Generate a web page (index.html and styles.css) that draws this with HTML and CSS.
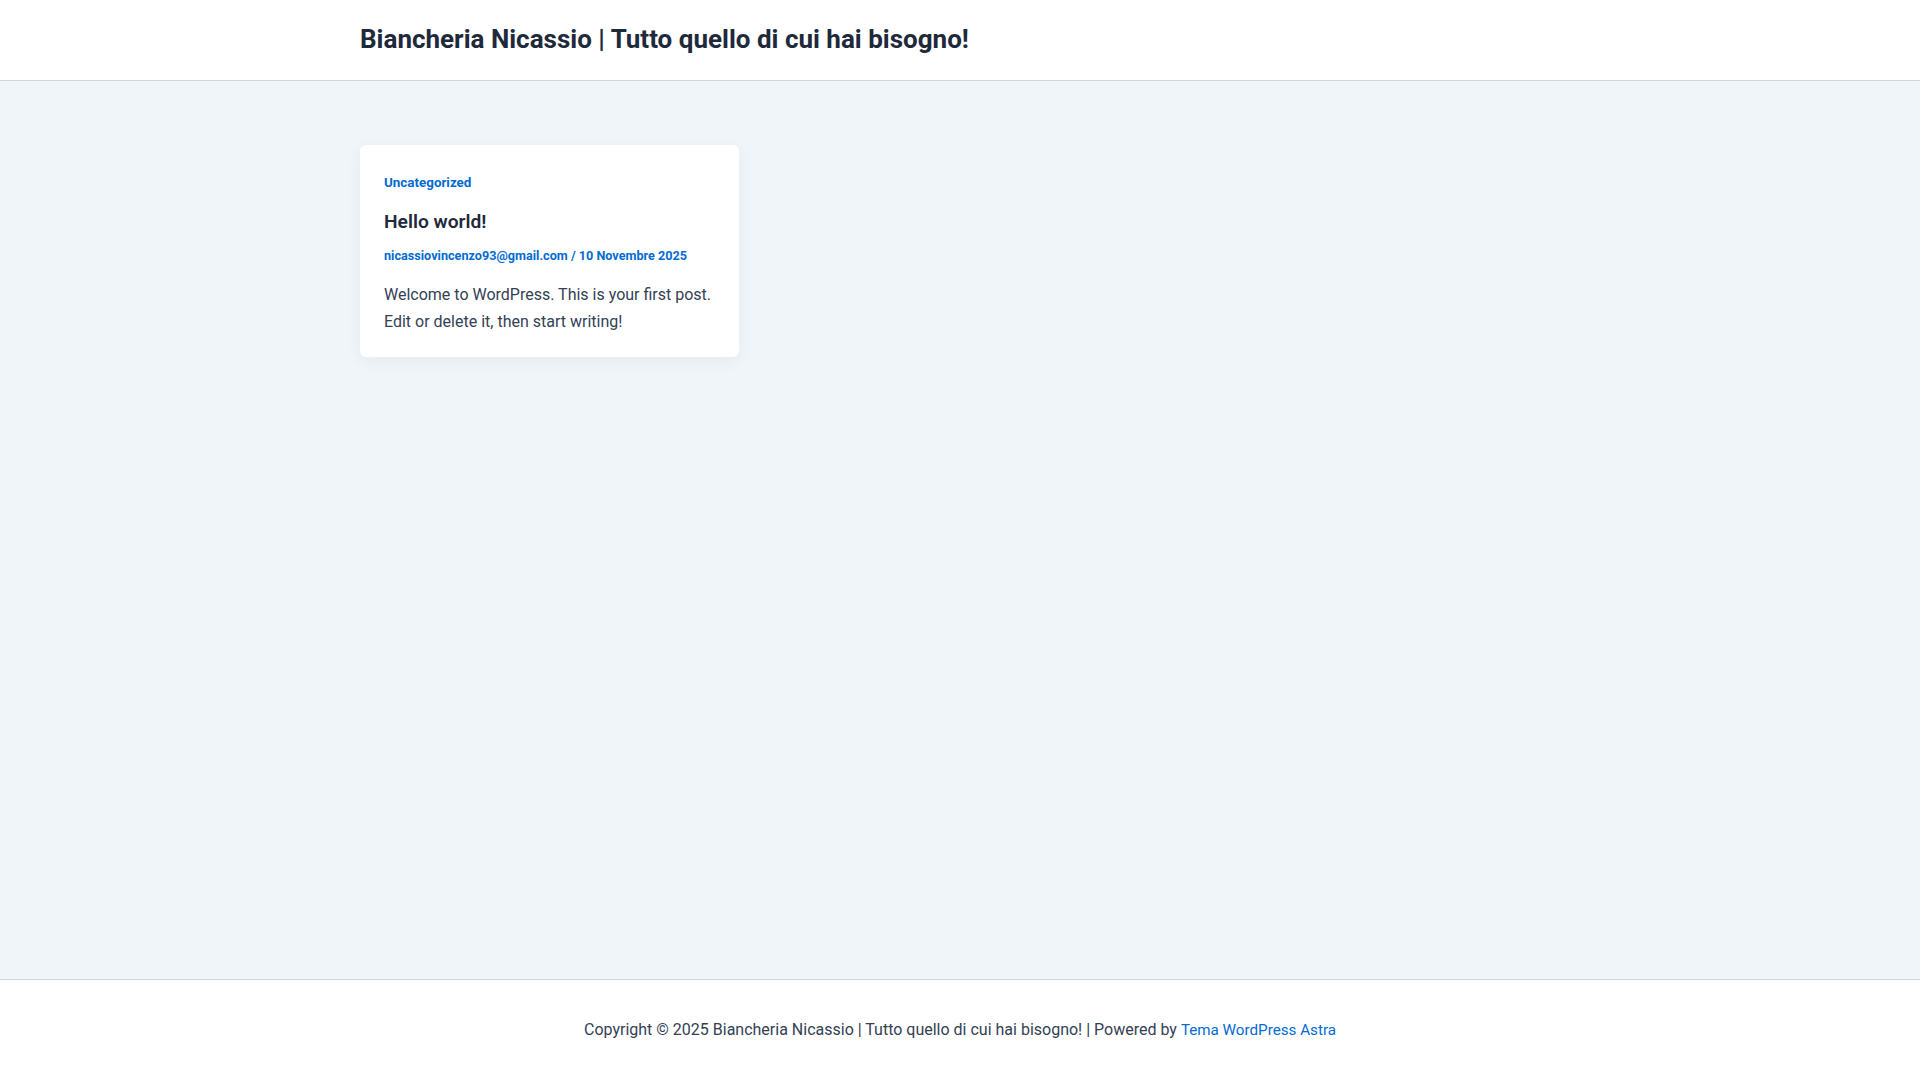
FILE: index.html
```html
<!DOCTYPE html>
<html lang="it">
<head>
<meta charset="utf-8">
<title>Biancheria Nicassio</title>
<link rel="stylesheet" href="styles.css">
</head>
<body>
<header class="site-header">
  <div class="container">
    <a class="site-title" href="#">Biancheria Nicassio | Tutto quello di cui hai bisogno!</a>
  </div>
</header>
<main class="site-main">
  <div class="container grid">
    <article class="post-card">
      <a class="cat" href="#">Uncategorized</a>
      <h2 class="post-title">Hello world!</h2>
      <div class="meta"><a href="#">nicassiovincenzo93@gmail.com</a> / <a href="#">10 Novembre 2025</a></div>
      <p class="excerpt">Welcome to WordPress. This is your first post. Edit or delete it, then start writing!</p>
    </article>
  </div>
</main>
<footer class="site-footer">
  <div class="footer-text">Copyright © 2025 Biancheria Nicassio | Tutto quello di cui hai bisogno! | Powered by <a class="footer-link" href="#">Tema WordPress Astra</a></div>
</footer>
</body>
</html>
```

FILE: styles.css
```css
* { box-sizing: border-box; }
html, body { height: 100%; }
body {
  margin: 0;
  font-family: Roboto, "Liberation Sans", sans-serif;
  color: #334155;
  display: flex;
  flex-direction: column;
  min-height: 100vh;
}
a { text-decoration: none; color: #046bd2; }
.container { width: 1200px; margin: 0 auto; }

.site-header {
  height: 81px;
  background: #fff;
  border-bottom: 1px solid #d1d5db;
}
.site-header .container { height: 80px; display: flex; align-items: center; }
.site-title {
  color: #1e293b;
  font-weight: 700;
  font-size: 26px;
  line-height: 1.2;
}

.site-main {
  flex: 1;
  background: #f0f5fa;
  padding-top: 64px;
}
.grid {
  display: grid;
  grid-template-columns: repeat(3, 1fr);
  gap: 32px;
}
.post-card {
  background: #fff;
  border-radius: 6px;
  box-shadow: 0 4px 16px rgba(30, 41, 59, 0.05);
  padding: 28px 24px 22px;
}
.cat {
  display: block;
  font-size: 13.4px;
  font-weight: 700;
  line-height: 20px;
}
.post-title {
  margin: 17px 0 0;
  font-size: 19.2px;
  font-weight: 600;
  line-height: 24px;
  color: #1e293b;
}
.meta {
  margin-top: 13px;
  font-size: 12.65px;
  font-weight: 700;
  color: #046bd2;
  line-height: 18px;
}
.excerpt {
  margin: 16px 0 0;
  font-size: 16px;
  line-height: 27px;
  color: #334155;
}

.site-footer {
  height: 101px;
  background: #fff;
  border-top: 1px solid #d1d5db;
  display: flex;
  align-items: center;
  justify-content: center;
}
.footer-text { font-size: 16px; line-height: 24px; color: #334155; }
.footer-link { font-size: 15.2px; }
```
